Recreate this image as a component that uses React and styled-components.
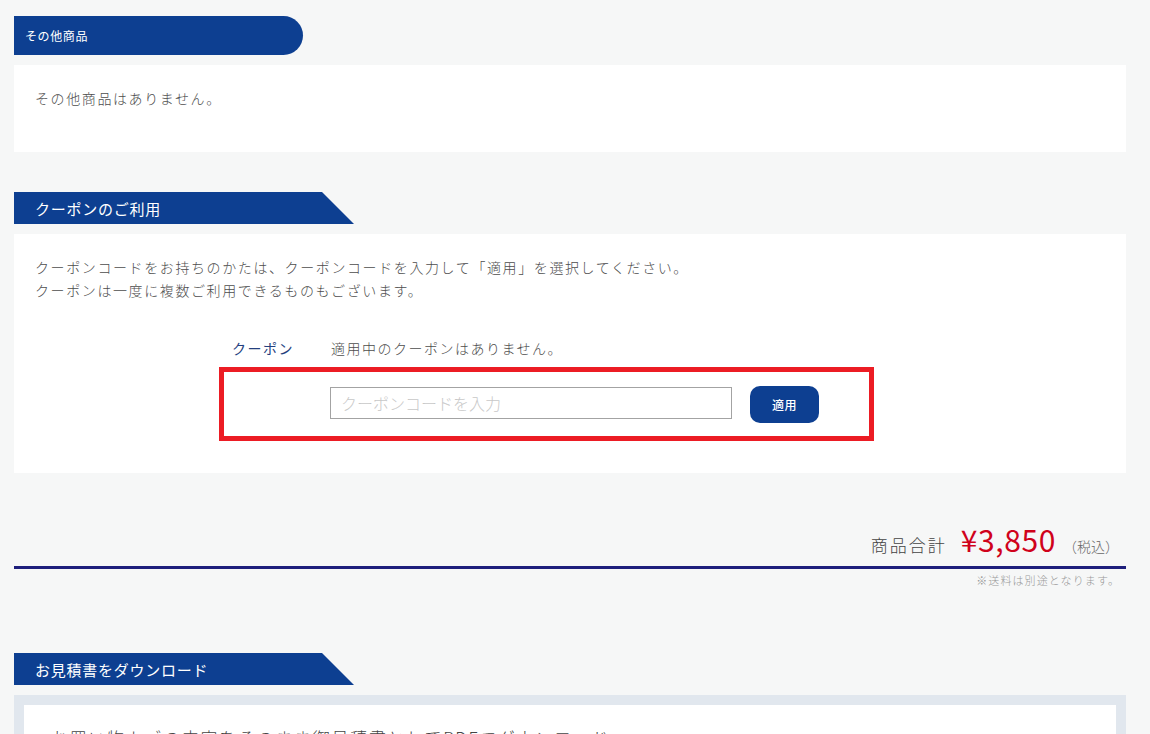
import React from 'react'
import styled, { createGlobalStyle } from 'styled-components'

const GlobalStyle = createGlobalStyle`
  html, body {
    margin: 0;
    padding: 0;
    background: #f6f7f7;
  }
  body {
    font-family: "Noto Sans CJK JP", "Noto Sans", sans-serif;
    font-weight: 300;
    color: #4d4d4d;
  }
  * { box-sizing: border-box; }
`

const Page = styled.div`
  width: 1150px;
  padding: 16px 24px 0 14px;
`

const Section = styled.section`
  margin-top: ${p => p.$top || 0}px;
`

const PillHeader = styled.h2`
  margin: 0;
  width: 289px;
  height: 39px;
  display: flex;
  align-items: center;
  padding-left: 11px;
  background: #0d3f91;
  border-radius: 0 20px 20px 0;
  color: #fff;
  font-size: 12px;
  font-weight: 400;
  letter-spacing: 0.05em;
`

const FlagHeader = styled.h2`
  margin: 0;
  width: 340px;
  height: 32px;
  display: flex;
  align-items: center;
  padding-left: 21px;
  background: #0d3f91;
  clip-path: polygon(0 0, 308px 0, 100% 100%, 0 100%);
  color: #fff;
  font-size: 15px;
  font-weight: 400;
  letter-spacing: 0.05em;
`

const Panel = styled.div`
  margin-top: 10px;
  background: #fff;
  padding: ${p => p.$pad || '22px 21px'};
`

const Text = styled.p`
  margin: 0;
  font-size: 14px;
  line-height: 23px;
  letter-spacing: 1.6px;
`

const CouponRow = styled.div`
  display: flex;
  margin: 35px 0 0 197px;
  font-size: 14px;
  line-height: 23px;
  letter-spacing: 1.5px;
`

const CouponLabel = styled.span`
  width: 99px;
  color: #243f7e;
  font-weight: 400;
`

const CodeForm = styled.form`
  margin: 7px 0 0 184px;
  width: 655px;
  height: 74px;
  border: 5px solid #ec1c24;
  display: flex;
  align-items: center;
  padding-left: 106px;
`

const CodeInput = styled.input`
  width: 402px;
  height: 32px;
  margin-top: -2px;
  border: 1px solid #a3a3a3;
  padding: 0 10px;
  font-family: inherit;
  font-size: 16px;
  font-weight: 300;
  color: #333;
  background: #fff;
  outline: none;
  &::placeholder {
    color: #c8c8c8;
  }
`

const ApplyButton = styled.button`
  margin-left: 18px;
  width: 69px;
  height: 37px;
  border: none;
  border-radius: 10px;
  background: #0d3f91;
  color: #fff;
  font-family: inherit;
  font-size: 12px;
  font-weight: 500;
  letter-spacing: 0.05em;
  cursor: pointer;
`

const TotalRow = styled.div`
  margin-top: 48px;
  display: flex;
  justify-content: flex-end;
  align-items: baseline;
  padding: 0 7px 9px 0;
  border-bottom: 3px solid #1e1f7c;
`

const TotalLabel = styled.span`
  font-size: 17px;
  letter-spacing: 0.12em;
  color: #444;
`

const Price = styled.span`
  margin-left: 14px;
  font-size: 30px;
  line-height: 36px;
  color: #d0021b;
  font-weight: 400;
  letter-spacing: 0.02em;
`

const TaxNote = styled.span`
  margin-left: 7px;
  font-size: 14px;
  color: #666;
`

const ShippingNote = styled.p`
  margin: 3px 0 0;
  text-align: right;
  padding-right: 6px;
  font-size: 11px;
  line-height: 17px;
  letter-spacing: 0.1em;
  color: #999;
`

const Frame = styled.div`
  margin-top: 10px;
  background: #e1e7ee;
  padding: 10px;
`

const FrameInner = styled.div`
  background: #fff;
  padding: 20px 24px 23px 27px;
  font-size: 17px;
  line-height: 26px;
  letter-spacing: 0.1em;
  color: #444;
`

export default function App() {
  return (
    <>
      <GlobalStyle />
      <Page>
        <Section>
          <PillHeader>その他商品</PillHeader>
          <Panel $pad="22px 21px 42px">
            <Text>その他商品はありません。</Text>
          </Panel>
        </Section>

        <Section $top={40}>
          <FlagHeader>クーポンのご利用</FlagHeader>
          <Panel $pad="22px 21px 32px">
            <Text>クーポンコードをお持ちのかたは、クーポンコードを入力して「適用」を選択してください。</Text>
            <Text>クーポンは一度に複数ご利用できるものもございます。</Text>
            <CouponRow>
              <CouponLabel>クーポン</CouponLabel>
              <span>適用中のクーポンはありません。</span>
            </CouponRow>
            <CodeForm onSubmit={e => e.preventDefault()}>
              <CodeInput type="text" placeholder="クーポンコードを入力" />
              <ApplyButton type="submit">適用</ApplyButton>
            </CodeForm>
          </Panel>
        </Section>

        <TotalRow>
          <TotalLabel>商品合計</TotalLabel>
          <Price>¥3,850</Price>
          <TaxNote>（税込）</TaxNote>
        </TotalRow>
        <ShippingNote>※送料は別途となります。</ShippingNote>

        <Section $top={64}>
          <FlagHeader>お見積書をダウンロード</FlagHeader>
          <Frame>
            <FrameInner>お買い物カゴの内容をそのまま御見積書としてPDFでダウンロード</FrameInner>
          </Frame>
        </Section>
      </Page>
    </>
  )
}
